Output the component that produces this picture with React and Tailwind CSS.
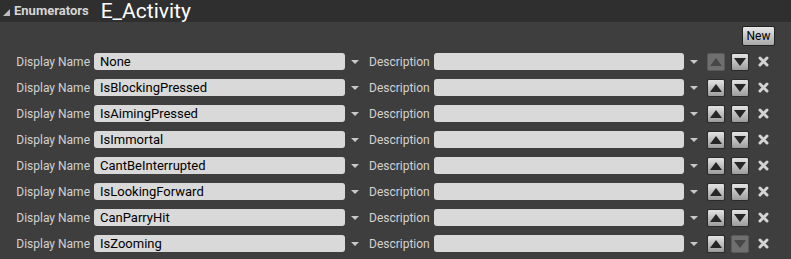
import React from "react";

const items = [
  "None",
  "IsBlockingPressed",
  "IsAimingPressed",
  "IsImmortal",
  "CantBeInterrupted",
  "IsLookingForward",
  "CanParryHit",
  "IsZooming",
];

const Arrow = () => (
  <svg width="8" height="4" viewBox="0 0 8 4">
    <path d="M0 0 L8 0 L4 4 Z" fill="#c8c8c8" />
  </svg>
);

const MoveButton = ({ dir, disabled }) => (
  <div
    className={
      "w-[18px] h-[18px] flex items-center justify-center rounded-[2px] border " +
      (disabled
        ? "bg-[#6f6f6f] border-[#5a5a5a]"
        : "bg-gradient-to-b from-[#e4e4e4] to-[#9c9c9c] border-[#2a2a2a]")
    }
  >
    <svg width="12" height="8" viewBox="0 0 12 8">
      {dir === "up" ? (
        <path d="M0 8 L6 0 L12 8 Z" fill={disabled ? "#474747" : "#262626"} />
      ) : (
        <path d="M0 0 L12 0 L6 8 Z" fill={disabled ? "#474747" : "#262626"} />
      )}
    </svg>
  </div>
);

const Row = ({ name, first, last }) => (
  <div className="flex items-center h-[17px] text-[12px]">
    <span className="w-[94px] pr-[4px] text-right text-[#d2d2d2] whitespace-nowrap">Display Name</span>
    <div className="w-[251px] h-[17px] rounded-[3px] bg-[#d9d9d9] text-black text-[13px] pl-[6px] flex items-center">
      {name}
    </div>
    <div className="w-[24px] flex justify-start pl-[6px]">
      <Arrow />
    </div>
    <span className="w-[65px] text-[#d2d2d2] whitespace-nowrap">Description</span>
    <div className="w-[250px] h-[17px] rounded-[3px] bg-[#d9d9d9]" />
    <div className="w-[23px] flex justify-start pl-[6px]">
      <Arrow />
    </div>
    <MoveButton dir="up" disabled={first} />
    <div className="w-[6px]" />
    <MoveButton dir="down" disabled={last} />
    <div className="w-[9px]" />
    <svg width="11" height="11" viewBox="0 0 11 11">
      <path d="M2 2 L9 9 M9 2 L2 9" stroke="#d4d4d4" strokeWidth="3" strokeLinecap="round" />
    </svg>
  </div>
);

export default function App() {
  return (
    <div
      className="w-[791px] h-[259px] bg-[#3e3e3e] overflow-hidden"
      style={{ fontFamily: "Roboto, 'Noto Sans', sans-serif" }}
    >
      <div className="h-[22px] bg-[#2f2f2f] flex items-center">
        <svg width="7" height="7" viewBox="0 0 7 7" className="ml-[3px] mt-[2px]">
          <path d="M7 0 L7 7 L0 7 Z" fill="#bdbdbd" />
        </svg>
        <span className="ml-[4px] text-[13px] font-bold text-[#d6d6d6]">Enumerators</span>
        <span className="ml-[12px] text-[21px] text-white leading-[22px]">E_Activity</span>
      </div>
      <div className="flex justify-end pr-[16px] pt-[4px]">
        <button className="w-[33px] h-[20px] rounded-[2px] border border-[#222] bg-gradient-to-b from-[#e8e8e8] to-[#a8a8a8] text-[12px] text-black">
          New
        </button>
      </div>
      <div className="flex flex-col gap-[9px] mt-[7px]">
        {items.map((it, i) => (
          <Row key={it} name={it} first={i === 0} last={i === items.length - 1} />
        ))}
      </div>
    </div>
  );
}
